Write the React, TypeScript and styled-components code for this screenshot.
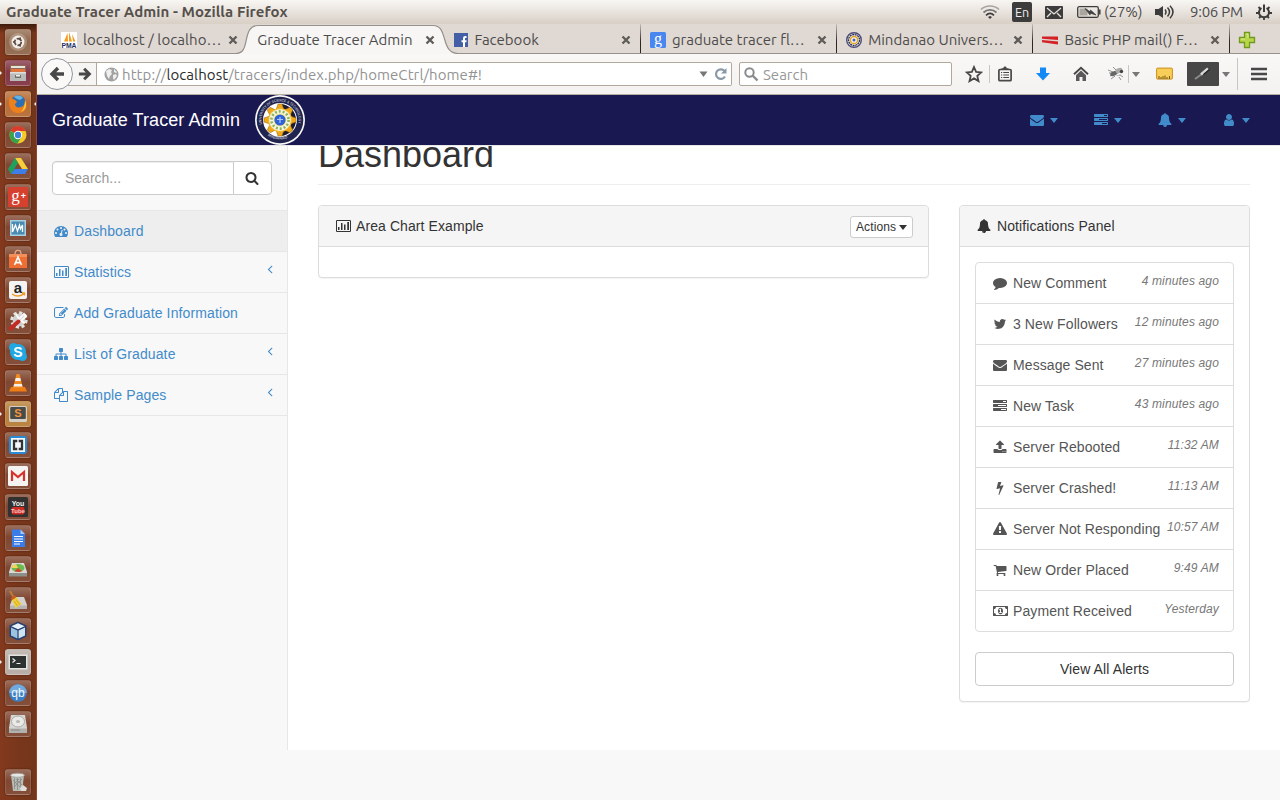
import React from "react";
import styled, { createGlobalStyle } from "styled-components";

const GlobalStyle = createGlobalStyle`
  * { box-sizing: border-box; }
  html, body { margin: 0; padding: 0; background: #f8f8f8; }
  body { width: 1280px; height: 800px; overflow: hidden; font-family: "Liberation Sans", Arial, sans-serif; font-size: 14px; line-height: 20px; color: #333; }
  button, input { font-family: inherit; }
`;

/* ---------- icon set ---------- */

const paths = {
  envelope:
    "M1792 710v794q0 66-47 113t-113 47h-1472q-66 0-113-47t-47-113v-794q44 49 101 87 362 246 497 345 57 42 92.5 65.5t94.5 48 110 24.5h2q51 0 110-24.5t94.5-48 92.5-65.5q170-123 498-345 57-39 100-87zm0-294q0 79-49 151t-122 123q-376 261-468 325-10 7-42.5 31t-54 38.5-52 32.5-57.5 27-50 9h-2q-23 0-50-9t-57.5-27-52-32.5-54-38.5-42.5-31q-91-64-262-182.5t-205-142.5q-62-42-117-115.5t-55-136.5q0-78 41.5-130t118.5-52h1472q65 0 112.5 47t47.5 113z",
  tasks:
    "M1024 1408h640v-128h-640v128zm-384-512h1024v-128h-1024v128zm640-512h384v-128h-384v128zm512 832v256q0 26-19 45t-45 19h-1664q-26 0-45-19t-19-45v-256q0-26 19-45t45-19h1664q26 0 45 19t19 45zm0-512v256q0 26-19 45t-45 19h-1664q-26 0-45-19t-19-45v-256q0-26 19-45t45-19h1664q26 0 45 19t19 45zm0-512v256q0 26-19 45t-45 19h-1664q-26 0-45-19t-19-45v-256q0-26 19-45t45-19h1664q26 0 45 19t19 45z",
  bell: "M912 1696q0-16-16-16-59 0-101.5-42.5t-42.5-101.5q0-16-16-16t-16 16q0 73 51.5 124.5t124.5 51.5q16 0 16-16zm816-288q0 52-38 90t-90 38h-448q0 106-75 181t-181 75-181-75-75-181h-448q-52 0-90-38t-38-90q50-42 91-88t85-119.5 74.5-158.5 50-206 19.5-260q0-152 117-282.5t307-158.5q-8-19-8-39 0-40 28-68t68-28 68 28 28 68q0 20-8 39 190 28 307 158.5t117 282.5q0 139 19.5 260t50 206 74.5 158.5 85 119.5 91 88z",
  user: "M1536 1399q0 109-62.5 187t-150.5 78h-854q-88 0-150.5-78t-62.5-187q0-85 8.5-160.5t31.5-152 58.5-131 94-89 134.5-34.5q131 128 313 128t313-128q76 0 134.5 34.5t94 89 58.5 131 31.5 152 8.5 160.5zm-256-887q0 159-112.5 271.5t-271.5 112.5-271.5-112.5-112.5-271.5 112.5-271.5 271.5-112.5 271.5 112.5 112.5 271.5z",
  comment:
    "M1792 896q0 174-120 321.5t-326 233-450 85.5q-70 0-145-8-198 175-460 242-49 14-114 22-17 2-30.5-9t-17.5-29v-1q-3-4-.5-12t2-10 4.5-9.5l6-9 7-8.5 8-9q7-8 31-34.5t34.5-38 31-39.5 32.5-51 27-59 26-76q-157-89-247.5-220t-90.5-281q0-130 71-248.5t191-204.5 286-136.5 348-50.5q244 0 450 85.5t326 233 120 321.5z",
  twitter:
    "M1684 408q-67 98-162 167 1 14 1 42 0 130-38 259.5t-115.5 248.5-184.5 210.5-258 146-323 54.5q-271 0-496-145 35 4 78 4 225 0 401-138-105-2-188-64.5t-114-159.5q33 5 61 5 43 0 85-11-112-23-185.5-111.5t-73.5-205.5v-4q68 38 146 41-66-44-105-115t-39-154q0-88 44-163 121 149 294.5 238.5t371.5 99.5q-8-38-8-74 0-134 94.5-228.5t228.5-94.5q140 0 236 102 109-21 205-78-37 115-142 178 93-10 186-50z",
  upload:
    "M1344 1472q0-26-19-45t-45-19-45 19-19 45 19 45 45 19 45-19 19-45zm256 0q0-26-19-45t-45-19-45 19-19 45 19 45 45 19 45-19 19-45zm128-224v320q0 40-28 68t-68 28h-1472q-40 0-68-28t-28-68v-320q0-40 28-68t68-28h427q21 56 70.5 92t110.5 36h256q61 0 110.5-36t70.5-92h427q40 0 68 28t28 68zm-325-648q-17 40-59 40h-256v448q0 26-19 45t-45 19h-256q-26 0-45-19t-19-45v-448h-256q-42 0-59-40-17-39 14-69l448-448q18-19 45-19t45 19l448 448q31 30 14 69z",
  bolt: "M1333 566q18 20 7 44l-540 1157q-13 25-42 25-4 0-14-2-17-5-25.5-19t-4.5-30l197-808-406 101q-4 1-12 1-18 0-31-11-18-15-13-39l201-825q4-14 16-23t28-9h328q19 0 32 12.5t13 29.5q0 8-5 18l-171 463 396-98q8-2 12-2 19 0 34 15z",
  warning:
    "M1024 1375v-190q0-14-9.5-23.5t-22.5-9.5h-192q-13 0-22.5 9.5t-9.5 23.5v190q0 14 9.5 23.5t22.5 9.5h192q13 0 22.5-9.5t9.5-23.5zm-2-374l18-459q0-12-10-19-13-11-24-11h-220q-11 0-24 11-10 7-10 21l17 457q0 10 10 16.5t24 6.5h185q14 0 23.5-6.5t10.5-16.5zm-14-934l768 1408q35 63-2 126-17 29-46.5 46t-63.5 17h-1536q-34 0-63.5-17t-46.5-46q-37-63-2-126l768-1408q17-31 47-49t65-18 65 18 47 49z",
  cart: "M704 1536q0 52-38 90t-90 38-90-38-38-90 38-90 90-38 90 38 38 90zm896 0q0 52-38 90t-90 38-90-38-38-90 38-90 90-38 90 38 38 90zm128-1088v512q0 24-16.5 42.5t-40.5 21.5l-1044 122q13 60 13 70 0 16-24 64h920q26 0 45 19t19 45-19 45-45 19h-1024q-26 0-45-19t-19-45q0-11 8-31.5t16-36 21.5-40 15.5-29.5l-177-823h-204q-26 0-45-19t-19-45 19-45 45-19h256q16 0 28.5 6.5t19.5 15.5 13 24.5 8 26 5.5 29.5 4.5 26h1201q26 0 45 19t19 45z",
  money:
    "M768 1152h384v-96h-128v-448h-114l-148 137 77 80q42-37 55-57h2v288h-128v96zm512-256q0 70-21 142t-59.5 134-101.5 101-138 39-138-39-101.5-101-59.5-134-21-142 21-142 59.5-134 101.5-101 138-39 138 39 101.5 101 59.5 134 21 142zm512 256v-512q-106 0-181-75t-75-181h-1152q0 106-75 181t-181 75v512q106 0 181 75t75 181h1152q0-106 75-181t181-75zm128-832v1152q0 26-19 45t-45 19h-1792q-26 0-45-19t-19-45v-1152q0-26 19-45t45-19h1792q26 0 45 19t19 45z",
  chart:
    "M448 1024v384h-192v-384zM832 512v896h-192v-896zM1216 704v704h-192v-704zM1664 384v1024h-224v-1024zM1760 256h-1600q-32 0-32 32v1216q0 32 32 32h1600q32 0 32-32v-1216q0-32-32-32zm160 32v1216q0 66-47 113t-113 47h-1600q-66 0-113-47t-47-113v-1216q0-66 47-113t113-47h1600q66 0 113 47t47 113z",
  dashboard:
    "M384 1152q0-53-37.5-90.5t-90.5-37.5-90.5 37.5-37.5 90.5 37.5 90.5 90.5 37.5 90.5-37.5 37.5-90.5zm192-448q0-53-37.5-90.5t-90.5-37.5-90.5 37.5-37.5 90.5 37.5 90.5 90.5 37.5 90.5-37.5 37.5-90.5zm428 481l101-382q6-26-7.5-48.5t-38.5-29.5-48 6.5-30 39.5l-101 382q-60 5-107 43.5t-63 98.5q-20 77 20 146t117 89 146-20 89-117q16-60-6-117t-72-91zm660-33q0-53-37.5-90.5t-90.5-37.5-90.5 37.5-37.5 90.5 37.5 90.5 90.5 37.5 90.5-37.5 37.5-90.5zm-640-640q0-53-37.5-90.5t-90.5-37.5-90.5 37.5-37.5 90.5 37.5 90.5 90.5 37.5 90.5-37.5 37.5-90.5zm448 192q0-53-37.5-90.5t-90.5-37.5-90.5 37.5-37.5 90.5 37.5 90.5 90.5 37.5 90.5-37.5 37.5-90.5zm320 448q0 261-141 483-19 29-54 29h-1402q-35 0-54-29-141-221-141-483 0-182 71-348t191-286 286-191 348-71 348 71 286 191 191 286 71 348z",
  edit: "M888 1184l116-116-152-152-116 116v56h96v96h56zm440-720q-16-16-33 1l-350 350q-17 17-1 33t33-1l350-350q17-17 1-33zm80 594v190q0 119-84.5 203.5t-203.5 84.5h-832q-119 0-203.5-84.5t-84.5-203.5v-832q0-119 84.5-203.5t203.5-84.5h832q63 0 117 25 15 7 18 23 3 17-9 29l-49 49q-14 14-32 8-23-6-45-6h-832q-66 0-113 47t-47 113v832q0 66 47 113t113 47h832q66 0 113-47t47-113v-126q0-13 9-22l64-64q15-15 35-7t20 29zm-96-738l288 288-672 672h-288v-288zm444 132l-92 92-288-288 92-92q28-28 68-28t68 28l152 152q28 28 28 68t-28 68z",
  sitemap:
    "M1792 1248v320q0 40-28 68t-68 28h-320q-40 0-68-28t-28-68v-320q0-40 28-68t68-28h96v-192h-512v192h96q40 0 68 28t28 68v320q0 40-28 68t-68 28h-320q-40 0-68-28t-28-68v-320q0-40 28-68t68-28h96v-192h-512v192h96q40 0 68 28t28 68v320q0 40-28 68t-68 28h-320q-40 0-68-28t-28-68v-320q0-40 28-68t68-28h96v-192q0-52 38-90t90-38h512v-192h-96q-40 0-68-28t-28-68v-320q0-40 28-68t68-28h320q40 0 68 28t28 68v320q0 40-28 68t-68 28h-96v192h512q52 0 90 38t38 90v192h96q40 0 68 28t28 68z",
  files:
    "M1696 384q40 0 68 28t28 68v1216q0 40-28 68t-68 28h-960q-40 0-68-28t-28-68v-288h-544q-40 0-68-28t-28-68v-672q0-40 20-88t48-76l408-408q28-28 76-48t88-20h416q40 0 68 28t28 68v328q68-40 128-40h416zm-544 213l-299 299h299v-299zm-640-384l-299 299h299v-299zm196 647l316-316v-416h-384v416q0 40-28 68t-68 28h-416v640h512v-256q0-40 20-88t48-76zm956 804v-1152h-384v416q0 40-28 68t-68 28h-416v640h896z",
  search:
    "M1216 832q0-185-131.5-316.5t-316.5-131.5-316.5 131.5-131.5 316.5 131.5 316.5 316.5 131.5 316.5-131.5 131.5-316.5zm512 832q0 52-38 90t-90 38q-54 0-90-38l-343-342q-179 124-399 124-143 0-273.5-55.5t-225-150-150-225-55.5-273.5 55.5-273.5 150-225 225-150 273.5-55.5 273.5 55.5 225 150 150 225 55.5 273.5q0 220-124 399l343 343q37 37 37 90z",
  angle:
    "M1203 544q0 13-10 23l-393 393 393 393q10 10 10 23t-10 23l-50 50q-10 10-23 10t-23-10l-466-466q-10-10-10-23t10-23l466-466q10-10 23-10t23 10l50 50q10 10 10 23z",
};
type IconName = keyof typeof paths;

const IconBox = styled.span<{ $w?: number }>`
  display: inline-flex;
  flex: none;
  justify-content: center;
  align-items: center;
  width: ${(p) => p.$w ?? 18}px;
  height: 20px;
  svg { flex: none; }
`;

function Icon({ name, w }: { name: IconName; w?: number }) {
  const vw = name === "money" || name === "chart" ? 1920 : 1792;
  return (
    <IconBox $w={w}>
      <svg width={vw / 128} height="14" viewBox={`0 0 ${vw} 1792`} fill="currentColor">
        <path fillRule={name === "chart" ? "evenodd" : "nonzero"} d={paths[name]} />
      </svg>
    </IconBox>
  );
}

const Caret = styled.span`
  flex: none;
  width: 0;
  height: 0;
  border-top: 5px solid currentColor;
  border-left: 4px solid transparent;
  border-right: 4px solid transparent;
`;

/* ---------- desktop shell ---------- */

const Desktop = styled.div`
  width: 1280px;
  height: 800px;
  display: flex;
  flex-direction: column;
  overflow: hidden;
`;

const UiText = styled.span<{ $size?: number; $ls?: number; $color?: string; $bold?: boolean }>`
  font-family: Ubuntu, "Open Sans", "Noto Sans", sans-serif;
  font-size: ${(p) => p.$size ?? 15}px;
  letter-spacing: ${(p) => p.$ls ?? 0}px;
  font-weight: ${(p) => (p.$bold ? 700 : 400)};
  color: ${(p) => p.$color ?? "#4c4c4c"};
  line-height: 20px;
  white-space: nowrap;
`;

const MenuBar = styled.header`
  flex: none;
  height: 24px;
  padding: 0 8px 0 6px;
  display: flex;
  align-items: center;
  justify-content: space-between;
  background: linear-gradient(#f8f6f3 0, #efebe7 30%, #d8cfc5 100%);
`;

const Indicators = styled.div`
  display: flex;
  align-items: center;
`;

const Indicator = styled.div<{ $w: number }>`
  width: ${(p) => p.$w}px;
  flex: none;
  display: flex;
  align-items: center;
  white-space: nowrap;
`;

const Lang = styled.div`
  width: 20px;
  height: 20px;
  border-radius: 2px;
  background: #3c3c3c;
  display: flex;
  align-items: center;
  justify-content: center;
`;

const Main = styled.div`
  flex: 1;
  display: flex;
  min-height: 0;
`;

const Launcher = styled.nav`
  width: 37px;
  flex: none;
  padding: 5px 0 5px;
  display: flex;
  flex-direction: column;
  gap: 5px;
  background: linear-gradient(#3c1a0b 0, rgba(123, 56, 27, 0) 9px), linear-gradient(90deg, #83391d, #78371c 50%, #74361b);
  border-right: 1px solid #93452f;
`;

const Slot = styled.div<{ $last?: boolean; $run?: boolean }>`
  height: 26px;
  flex: none;
  display: flex;
  align-items: center;
  margin-top: ${(p) => (p.$last ? "auto" : "0")};
  &::before {
    content: "";
    width: 2px;
    height: 4px;
    margin-right: 3px;
    clip-path: polygon(0 0, 100% 50%, 0 100%);
    background: ${(p) => (p.$run ? "#eee" : "transparent")};
  }
`;

const FocusMark = styled.span`
  width: 2px;
  height: 4px;
  margin-left: 3px;
  background: #eee;
  clip-path: polygon(100% 0, 0 50%, 100% 100%);
`;

const Tile = styled.div<{ $bg?: string }>`
  width: 26px;
  height: 26px;
  border-radius: 3px;
  border: 1px solid rgba(255, 235, 220, 0.14);
  background: linear-gradient(rgba(255, 255, 255, 0.24), rgba(255, 255, 255, 0.04) 45%, rgba(255, 255, 255, 0.08)),
    ${(p) => p.$bg ?? "#7a4029"};
  box-shadow: 0 0 2px rgba(40, 10, 0, 0.6);
  display: flex;
  align-items: center;
  justify-content: center;
`;

const Art = ({ children }: { children: React.ReactNode }) => (
  <svg width="20" height="20" viewBox="0 0 20 20">
    {children}
  </svg>
);

const glyph = (x: number, y: number, size: number, fill: string, text: string, font = "Liberation Sans", weight = 700) => (
  <text x={x} y={y} fontSize={size} fill={fill} textAnchor="middle" fontFamily={`"${font}", sans-serif`} fontWeight={weight}>
    {text}
  </text>
);

const apps: { id: string; bg?: string; run?: boolean; focus?: boolean; art: React.ReactNode }[] = [
  {
    id: "dash",
    bg: "#8d6448",
    art: (
      <>
        <circle cx="10" cy="10" r="9" fill="#fff" opacity=".22" />
        <circle cx="10" cy="10" r="6.4" fill="#f4eeea" />
        <circle cx="10" cy="10" r="3.3" fill="none" stroke="#5d4a40" strokeWidth="1.7" strokeDasharray="5.6 1.3" />
        <g fill="#5d4a40">
          <circle cx="5.9" cy="10" r="1" />
          <circle cx="12.1" cy="6.3" r="1" />
          <circle cx="12.1" cy="13.7" r="1" />
        </g>
      </>
    ),
  },
  {
    id: "files",
    bg: "#7e2f40",
    run: true,
    art: (
      <>
        <path d="M2 2h16v8H2z" fill="#8b6b55" />
        <path d="M3 3h14v2H3z" fill="#e9e4da" />
        <path d="M3 6h14v4H3z" fill="#e2733c" />
        <path d="M2 9h16v9H2z" fill="#b9b9b7" />
        <path d="M2 9h16v1.500H2z" fill="#dededc" />
        <path d="M7 12h6v3H7z" fill="#70706e" />
        <path d="M8 12h4v1.500H8z" fill="#eee" />
      </>
    ),
  },
  {
    id: "firefox",
    bg: "#b4682f",
    run: true,
    focus: true,
    art: (
      <>
        <circle cx="10" cy="10" r="9" fill="#e66a1c" />
        <circle cx="10.300" cy="8.200" r="7" fill="#2c6fb4" />
        <path d="M6 3c2-2 7-2 9 1l-3 2-3-1z" fill="#63b4e2" />
        <path d="M1 8c0-3 1-5 2-6l1 3c2 0 4 1 5 3l-2 2c0 3 3 4 6 3 3-1 4-3 4-7 3 5 2 13-7 13-6 0-9-5-9-11z" fill="#ee7f1d" />
        <path d="M17 6c2 5 1 10-4 12 3-3 4-7 4-12z" fill="#fbd03b" />
      </>
    ),
  },
  {
    id: "chrome",
    art: (
      <>
        <circle cx="10" cy="10" r="8.500" fill="#f5c927" />
        <path d="M10 10L2.600 5.700A8.500 8.500 0 0 1 17.600 6H10z" fill="#dd3a2c" />
        <path d="M2.600 5.700A8.500 8.500 0 0 0 9.500 18.500L13.400 12 10 10z" fill="#3ba24c" />
        <circle cx="10" cy="10" r="4.200" fill="#fff" />
        <circle cx="10" cy="10" r="3.200" fill="#3d82d8" />
      </>
    ),
  },
  {
    id: "drive",
    art: (
      <>
        <path d="M7 2h6l7 11h-6z" fill="#f8cf3a" />
        <path d="M7 2L0 13l3 5 7-11z" fill="#1fa05f" />
        <path d="M6.500 13H20l-3 5H3z" fill="#3e7ee8" />
      </>
    ),
  },
  {
    id: "plus",
    art: (
      <>
        <rect width="20" height="20" rx="1" fill="#d6402f" />
        {glyph(7.5, 14, 17, "#fff", "g", "Liberation Serif", 400)}
        {glyph(15.5, 12, 9, "#fff", "+")}
      </>
    ),
  },
  {
    id: "monitor",
    art: (
      <>
        <rect x="2" y="2" width="16" height="16" fill="#a9cfe2" />
        <rect x="3.500" y="3.500" width="13" height="13" fill="#4a8bb2" />
        <path d="M4.500 6v8l3-7 2 6 2-6 1 4 2-4v7" fill="none" stroke="#fff" strokeWidth="1.300" />
      </>
    ),
  },
  {
    id: "software",
    art: (
      <>
        <path d="M7 5c0-5 6-5 6 0" fill="none" stroke="#f1b28d" strokeWidth="1.200" />
        <path d="M1 5h18v14H1z" fill="#ee6e33" />
        <path d="M1 5h18v3H1z" fill="#f58f5a" />
        <path d="M6.500 16L10 8l3.500 8M7.500 13.600h5" fill="none" stroke="#fff" strokeWidth="1.600" />
      </>
    ),
  },
  {
    id: "amazon",
    art: (
      <>
        <rect x="1" y="1" width="18" height="18" rx="2" fill="#f4f3f1" />
        {glyph(10, 12.5, 15, "#222", "a")}
        <path d="M4 14c4 3 9 2.600 12-.4M14 13h2.500v2.500" fill="none" stroke="#f29a2c" strokeWidth="1.400" />
      </>
    ),
  },
  {
    id: "settings",
    art: (
      <>
        <circle cx="11" cy="9" r="6.400" fill="#d0d0ce" />
        <circle cx="11" cy="9" r="7.400" fill="none" stroke="#e4e4e2" strokeWidth="2.600" strokeDasharray="3.200 2.600" />
        <path d="M8 3l3 5 5-5 2 2-5 5 4 2" fill="none" stroke="#fafafa" strokeWidth="2" />
        <path d="M2.500 17.500l8-7" stroke="#c32a24" strokeWidth="4" strokeLinecap="round" />
      </>
    ),
  },
  {
    id: "skype",
    art: (
      <>
        <circle cx="10" cy="10" r="8" fill="#1fa8e3" />
        <circle cx="5.500" cy="5.500" r="4.500" fill="#1fa8e3" />
        <circle cx="14.500" cy="14.500" r="4.500" fill="#1fa8e3" />
        {glyph(10, 15, 14, "#fff", "S")}
      </>
    ),
  },
  {
    id: "vlc",
    art: (
      <>
        <path d="M3 14h14l2 4.500H1z" fill="#ee7d16" />
        <path d="M8.500 1h3L15 15H5z" fill="#f08a24" />
        <path d="M7.800 5h4.400l.8 3H7zM6.200 11h7.600l.7 2.500h-9z" fill="#f5f0ea" />
      </>
    ),
  },
  {
    id: "sublime",
    bg: "#b57a33",
    run: true,
    art: (
      <>
        <rect x="1" y="2" width="18" height="16" rx="1.500" fill="#d4cfc5" />
        <rect x="2.200" y="3" width="15.600" height="12" rx="1" fill="#4a4a48" />
        {glyph(10, 12.5, 11, "#f0973a", "S")}
      </>
    ),
  },
  {
    id: "brackets",
    art: (
      <>
        <rect x="1" y="1" width="18" height="18" rx="3" fill="#2a8ad4" />
        <rect x="3" y="3" width="14" height="14" fill="#f6f9fc" />
        <path d="M9.300 6H6v8h3.300M10.700 6H14v8h-3.300" fill="none" stroke="#333" strokeWidth="2.300" />
      </>
    ),
  },
  {
    id: "gmail",
    art: (
      <>
        <rect width="20" height="20" rx="1.500" fill="#f5f3f2" />
        <path d="M4 15V6l6 5 6-5v9" fill="none" stroke="#d5322c" strokeWidth="2.200" />
      </>
    ),
  },
  {
    id: "youtube",
    art: (
      <>
        <rect width="20" height="20" rx="1.500" fill="#333130" />
        {glyph(10, 8.5, 7, "#eee", "You", "Liberation Sans Narrow")}
        <rect x="3.500" y="10" width="13" height="7.500" rx="2" fill="#cf2b24" />
        {glyph(10, 16, 6, "#f0c8c4", "Tube", "Liberation Sans Narrow")}
      </>
    ),
  },
  {
    id: "docs",
    art: (
      <>
        <path d="M4 1.500h8.500L17 6v13H4z" fill="#3b7de8" />
        <path d="M12.500 1.500L17 6h-4.500z" fill="#a5c6f8" />
        <path d="M6 8.500h9M6 11h9M6 13.500h9M6 16h6" stroke="#fff" />
      </>
    ),
  },
  {
    id: "usage",
    art: (
      <>
        <path d="M4 4h12l3 9v4H1v-4z" fill="#d7d9d6" />
        <ellipse cx="10" cy="9" rx="6.500" ry="4" fill="#6cba4c" />
        <path d="M10 9H3.600c.3-2 2-3.500 4.400-3.900z" fill="#f3d35a" />
        <path d="M10 9l4 3.200c-2 1-5 1-7.500 0z" fill="#d8402f" />
        <path d="M1 14h18v3.500H1z" fill="#8d8f8b" />
      </>
    ),
  },
  {
    id: "sweeper",
    art: (
      <>
        <path d="M5 7h11l3 8v4H2v-4z" fill="#d3d2ce" />
        <path d="M2 15.500h17V19H2z" fill="#b5b4b0" />
        <path d="M2 1l3.500 6" stroke="#c07a34" strokeWidth="2" />
        <path d="M3.500 8.500l4-2.500 6 8-6 4z" fill="#f2cf3a" />
        <path d="M3 8l4-2.700 1.400 2L4.200 10z" fill="#c9571f" />
        <path d="M6 11l3.500 5M8 9.500l4 5.500" stroke="#c99a1c" strokeWidth=".7" />
      </>
    ),
  },
  {
    id: "box",
    art: (
      <>
        <path d="M10 .5l8.500 4v11L10 19.500l-8.500-4v-11z" fill="#27406f" />
        <path d="M10 2.300l6.600 2.900L10 8.300 3.400 5.200z" fill="#e8f2fa" />
        <path d="M3 6.500l6.400 3v8L3 14.500z" fill="#9dc3e2" />
        <path d="M17 6.500l-6.400 3v8l6.400-3z" fill="#cfe2f0" />
      </>
    ),
  },
  {
    id: "terminal",
    bg: "#b3a8a1",
    run: true,
    art: (
      <>
        <rect x=".5" y="2.500" width="19" height="15" fill="#e3e3e0" />
        <rect x="2" y="4" width="16" height="12" fill="#2d3230" />
        <path d="M4.500 6.500L7 8.500l-2.500 2M8.500 11.500h4" fill="none" stroke="#eee" strokeWidth="1.200" />
      </>
    ),
  },
  {
    id: "qb",
    art: (
      <>
        <circle cx="10" cy="10" r="8.800" fill="#3d7fc4" />
        <path d="M1.200 10a8.800 8.800 0 0 1 17.600 0z" fill="#70a9de" />
        {glyph(10, 13.5, 12, "#f4f8fc", "qb", "Liberation Sans", 400)}
      </>
    ),
  },
  {
    id: "disk",
    art: (
      <>
        <path d="M3 1h14l2 13v5H1v-5z" fill="#d5d5d2" />
        <ellipse cx="10" cy="7.500" rx="6.500" ry="5.500" fill="#e9e9e7" stroke="#a9a9a6" />
        <ellipse cx="10" cy="7.500" rx="2" ry="1.600" fill="#b5b5b2" />
        <path d="M1 14.500h18V19H1z" fill="#b1b1ad" />
        <path d="M3 16h9" stroke="#888" />
      </>
    ),
  },
];

const trash = (
  <>
    <path d="M3 3h13l-1.800 16H5z" fill="#b9bbb6" />
    <ellipse cx="9.500" cy="3.200" rx="7" ry="2" fill="#e6e6e3" stroke="#999" strokeWidth=".7" />
    <path d="M5 8l8 8M8 7l6 6M14 7l-8 8M11 7l-5 5M6.500 6v11M9.500 6v12M12.500 6v11" stroke="#83857f" strokeWidth=".7" />
    <path d="M12 16l3-3 4 3-1 3h-5z" fill="#dededb" />
  </>
);

/* ---------- browser chrome ---------- */

const Browser = styled.div`
  flex: 1;
  min-width: 0;
  display: flex;
  flex-direction: column;
`;

const TabStrip = styled.div`
  position: relative;
  height: 30px;
  flex: none;
  display: flex;
  padding-left: 15px;
  background: #e0d8d2;
  border-bottom: 1px solid #95918c;
`;

const ActiveShape = styled.svg`
  position: absolute;
  left: 199px;
  top: 0;
`;

const Tab = styled.div<{ $divider?: boolean }>`
  position: relative;
  width: 196.300px;
  height: 29px;
  padding: 3px 9px 0 9px;
  display: flex;
  align-items: center;
  gap: 6px;
  border-right: 1px solid transparent;
  border-image: ${(p) => (p.$divider ? "linear-gradient(rgba(60,50,40,.1), #2c2620 60%) 1" : "none")};
`;

const TabLabel = styled(UiText)`
  flex: 1;
`;

const Favicon = styled.svg`
  flex: none;
  display: block;
`;

const CloseMark = () => (
  <svg width="10" height="10" viewBox="0 0 10 10">
    <path d="M1.500 1.500l7 7M8.500 1.500l-7 7" stroke="#5e5b58" strokeWidth="2.300" />
  </svg>
);

const NewTab = styled.div`
  padding: 7px 0 0 8px;
`;

const Toolbar = styled.div`
  flex: none;
  height: 41px;
  padding: 0 0 0 4px;
  display: flex;
  align-items: center;
  background: linear-gradient(#f9f8f7, #f3f2f0);
  border-bottom: 1px solid #b8ae9f;
`;

const BackButton = styled.div`
  position: relative;
  width: 32px;
  height: 32px;
  flex: none;
  border-radius: 50%;
  border: 1px solid #8f979e;
  background: #faf9f8;
  display: flex;
  align-items: center;
  justify-content: center;
  z-index: 1;
`;

const ForwardButton = styled.div`
  width: 29px;
  height: 24px;
  margin-left: -5px;
  padding-left: 6px;
  flex: none;
  display: flex;
  align-items: center;
  justify-content: center;
  border: solid #b1a89b;
  border-width: 1px 1px 1px 0;
  background: #f6f5f4;
`;

const Field = styled.div<{ $w: number; $joined?: boolean }>`
  width: ${(p) => p.$w}px;
  height: 24px;
  flex: none;
  margin-left: ${(p) => (p.$joined ? 0 : 7)}px;
  padding: ${(p) => (p.$joined ? "0 1px 0 7px" : "0 4px")};
  display: flex;
  align-items: center;
  gap: 4px;
  background: #fff;
  border: 1px solid #b1a89b;
  border-left-width: ${(p) => (p.$joined ? 0 : 1)}px;
  border-radius: ${(p) => (p.$joined ? "0 2px 2px 0" : "2px")};
`;

const UrlText = styled(UiText)`
  flex: 1;
  padding-top: 1px;
  margin-left: -1px;
  b { font-weight: 400; color: #2b2b2b; }
`;

const SearchText = styled(UiText)`
  padding-top: 1px;
`;

const Tools = styled.div`
  display: flex;
  align-items: center;
  margin-left: 7px;
`;

const Tool = styled.div<{ $w: number; $dark?: boolean }>`
  width: ${(p) => p.$w}px;
  height: 24px;
  display: flex;
  align-items: center;
  justify-content: center;
  background: ${(p) => (p.$dark ? "#474747" : "none")};
  border-radius: 1px;
  color: #777;
`;

const Rule = styled.div<{ $h?: number }>`
  width: 1px;
  height: ${(p) => p.$h ?? 18}px;
  background: #c9c5c0;
`;

const Gap = styled.div<{ $w: number }>`
  width: ${(p) => p.$w}px;
`;

const Arrow = ({ flip, size }: { flip?: boolean; size: number }) => (
  <svg width={size} height={size} viewBox="0 0 16 16">
    <path d={flip ? "M7 2l6 6-6 6M13 8H1" : "M9 2L3 8l6 6M3 8h12"} fill="none" stroke="#484848" strokeWidth="3.400" />
  </svg>
);

/* ---------- web page ---------- */

const Page = styled.div`
  flex: 1;
  min-height: 0;
  display: flex;
  flex-direction: column;
  background: #f8f8f8;
`;

const NavBar = styled.div`
  height: 51px;
  flex: none;
  padding: 0 29px 0 15px;
  display: flex;
  align-items: center;
  background: #1a1850;
  border-bottom: 1px solid #e7e7e7;
`;

const Brand = styled.div`
  flex: 1;
  display: flex;
  align-items: center;
  gap: 15px;
  font-size: 18px;
  letter-spacing: 0.09px;
  color: #fff;
`;

const NavItem = styled.div<{ $end?: boolean }>`
  width: ${(p) => (p.$end ? 31 : 64)}px;
  display: flex;
  align-items: center;
  gap: 4px;
  color: #428bca;
`;

const Columns = styled.div`
  height: 604px;
  flex: none;
  display: flex;
`;

const SideBar = styled.aside`
  width: 251px;
  flex: none;
  border-right: 1px solid #e7e7e7;
  background: #f8f8f8;
`;

const SearchRow = styled.div`
  display: flex;
  padding: 15px;
  height: 65px;
  border-bottom: 1px solid #e7e7e7;
`;

const SearchInput = styled.input`
  width: 182px;
  height: 34px;
  padding: 6px 12px;
  font-size: 14px;
  color: #555;
  border: 1px solid #ccc;
  border-radius: 4px 0 0 4px;
  box-shadow: inset 0 1px 1px rgba(0, 0, 0, 0.075);
  background: #fff;
  outline: none;
  &::placeholder { color: #999; opacity: 1; }
`;

const SearchButton = styled.button`
  width: 39px;
  height: 34px;
  margin-left: -1px;
  padding: 0 1px 0 0;
  border: 1px solid #ccc;
  border-radius: 0 4px 4px 0;
  background: #fff;
  color: #333;
`;

const SideLink = styled.a<{ $active?: boolean }>`
  display: flex;
  height: 41px;
  padding: 10px 15px;
  border-bottom: 1px solid #e7e7e7;
  background: ${(p) => (p.$active ? "#eee" : "none")};
  color: #428bca;
  letter-spacing: 0.12px;
  gap: 4px;
`;

const Angle = styled.span`
  margin-left: auto;
  height: 14px;
  display: flex;
  align-items: center;
`;

const Content = styled.main`
  flex: 1;
  background: #fff;
  padding: 0 30px;
`;

const TitleClip = styled.div`
  height: 39px;
  overflow: hidden;
  border-bottom: 1px solid #eee;
  display: flex;
  align-items: flex-end;
  margin-bottom: 20px;
`;

const Title = styled.h1`
  margin: 0 0 9px;
  font-size: 36px;
  font-weight: 400;
  line-height: 40px;
`;

const PanelRow = styled.div`
  display: flex;
  align-items: flex-start;
  gap: 30px;
`;

const Panel = styled.section<{ $w: number }>`
  width: ${(p) => p.$w}px;
  border: 1px solid #ddd;
  border-radius: 4px;
  background: #fff;
  box-shadow: 0 1px 1px rgba(0, 0, 0, 0.05);
  letter-spacing: 0.09px;
`;

const PanelHead = styled.div`
  height: 41px;
  padding: 10px 15px;
  display: flex;
  gap: 4px;
  background: #f5f5f5;
  border-bottom: 1px solid #ddd;
  border-radius: 3px 3px 0 0;
`;

const PanelBody = styled.div`
  padding: 15px;
`;

const ActionsButton = styled.button`
  margin-left: auto;
  width: 63px;
  height: 22px;
  padding: 0 5px;
  display: flex;
  align-items: center;
  gap: 3px;
  font-size: 12px;
  line-height: 18px;
  letter-spacing: 0.1px;
  color: #333;
  background: #fff;
  border: 1px solid #ccc;
  border-radius: 3px;
`;

const List = styled.div`
  border: 1px solid #ddd;
  border-radius: 4px;
  margin-bottom: 20px;
`;

const ListItem = styled.a`
  height: 41px;
  padding: 10px 14px 10px 15px;
  display: flex;
  gap: 4px;
  color: #555;
  white-space: nowrap;
  border-bottom: 1px solid #ddd;
  &:last-child { height: 40px; border-bottom: 0; }
`;

const When = styled.em`
  margin-left: auto;
  font-size: 12px;
  line-height: 17px;
  letter-spacing: 0.15px;
  color: #777;
`;

const AlertsButton = styled.button`
  display: block;
  width: 100%;
  height: 34px;
  font-size: 14px;
  line-height: 20px;
  letter-spacing: 0.1px;
  color: #333;
  background: #fff;
  border: 1px solid #ccc;
  border-radius: 4px;
`;

function Seal({ size }: { size: number }) {
  return (
    <svg width={size} height={size} viewBox="0 0 50 50">
      <defs>
        <path id="sealTop" d="M7.200 30A18.500 18.500 0 1 1 42.800 30" />
        <path id="sealBottom" d="M5.500 31A20.800 20.800 0 0 0 44.500 31" />
      </defs>
      <circle cx="25" cy="25" r="25" fill="#f8f8f8" />
      <circle cx="25" cy="25" r="23.300" fill="#20244f" />
      <circle cx="25" cy="25" r="17" fill="#fff" />
      <path d="M25 9A16 16 0 0 1 25 41z" fill="#1c1c34" />
      <g fill="#f0a818" stroke="#8f6210" strokeWidth=".5">
        {[0, 45, 90, 135, 180, 225, 270, 315].map((a) => (
          <path key={a} d="M21 15L23 9h4l2 6z" transform={`rotate(${a} 25 25)`} />
        ))}
      </g>
      <circle cx="25" cy="25" r="12" fill="#f2b82a" />
      <circle cx="25" cy="25" r="10.800" fill="#f6f6e2" />
      <circle cx="25" cy="25" r="8.600" fill="none" stroke="#8fb45a" strokeWidth="2.600" strokeDasharray="2 1.900" />
      <circle cx="25" cy="25" r="6.500" fill="#f3e58a" />
      <circle cx="25" cy="25" r="5.600" fill="#2f62d8" />
      <path d="M22 24.500h6M25 22v6" stroke="#a9c8ff" strokeWidth="1.200" />
      <g fontFamily='"Liberation Sans", sans-serif' fontWeight="700" fill="#b9bac8" letterSpacing="0">
        <text fontSize="3.800">
          <textPath href="#sealTop" startOffset="1" textLength="65" lengthAdjust="spacingAndGlyphs">
            UNIVERSITY OF SCIENCE &amp; TECHNOLOGY
          </textPath>
        </text>
        <text fontSize="3.800">
          <textPath href="#sealBottom" startOffset="12">MINDANAO</textPath>
        </text>
      </g>
    </svg>
  );
}

function SealIcon() {
  return (
    <Favicon width="16" height="16" viewBox="0 0 16 16">
      <circle cx="8" cy="8" r="7.300" fill="#f4f2ee" stroke="#4a4a78" strokeWidth="1.400" />
      <circle cx="8" cy="8" r="5.500" fill="none" stroke="#2a2c52" strokeWidth="1.300" strokeDasharray="2 .6" />
      <circle cx="8" cy="8" r="3.600" fill="none" stroke="#e0a526" strokeWidth="1.500" />
      <circle cx="8" cy="8" r="1.500" fill="#3d62c4" />
    </Favicon>
  );
}

const sideLinks: { icon: IconName; label: string; more?: boolean; active?: boolean }[] = [
  { icon: "dashboard", label: "Dashboard", active: true },
  { icon: "chart", label: "Statistics", more: true },
  { icon: "edit", label: "Add Graduate Information" },
  { icon: "sitemap", label: "List of Graduate", more: true },
  { icon: "files", label: "Sample Pages", more: true },
];

const notifications: { icon: IconName; label: string; when: string }[] = [
  { icon: "comment", label: "New Comment", when: "4 minutes ago" },
  { icon: "twitter", label: "3 New Followers", when: "12 minutes ago" },
  { icon: "envelope", label: "Message Sent", when: "27 minutes ago" },
  { icon: "tasks", label: "New Task", when: "43 minutes ago" },
  { icon: "upload", label: "Server Rebooted", when: "11:32 AM" },
  { icon: "bolt", label: "Server Crashed!", when: "11:13 AM" },
  { icon: "warning", label: "Server Not Responding", when: "10:57 AM" },
  { icon: "cart", label: "New Order Placed", when: "9:49 AM" },
  { icon: "money", label: "Payment Received", when: "Yesterday" },
];

const navIcons: IconName[] = ["envelope", "tasks", "bell", "user"];

function SystemBar() {
  return (
    <MenuBar>
      <UiText $bold $ls={0.07} $color="#56514b">Graduate Tracer Admin - Mozilla Firefox</UiText>
      <Indicators>
        <Indicator $w={32}>
          <svg width="20" height="16" viewBox="0 0 20 16" fill="none" strokeWidth="1.700">
            <path d="M1 5.500c5-4.700 13-4.700 18 0" stroke="#a8a39c" />
            <path d="M3.500 8.500c3.800-3.500 9.200-3.500 13 0" stroke="#777" />
            <path d="M6 11.300c2.400-2.200 5.600-2.200 8 0" stroke="#3c3c3c" />
            <path d="M8 13l2-1 2 1-2 2z" fill="#3c3c3c" />
          </svg>
        </Indicator>
        <Indicator $w={33}>
          <Lang><UiText $size={12.5} $color="#eee">En</UiText></Lang>
        </Indicator>
        <Indicator $w={32}>
          <svg width="18" height="13" viewBox="0 0 18 13">
            <rect width="18" height="13" rx="1" fill="#3c3c3c" />
            <path d="M2 2l7 6 7-6M2 11l4-4M16 11l-4-4" fill="none" stroke="#e6e1db" strokeWidth="1.300" />
          </svg>
        </Indicator>
        <Indicator $w={27}>
          <svg width="24" height="12" viewBox="0 0 24 12">
            <rect x=".7" y=".7" width="20.600" height="10.600" rx="1.500" fill="none" stroke="#3c3c3c" strokeWidth="1.300" />
            <rect x="2.500" y="2.500" width="8" height="7" fill="#aaa59f" />
            <path d="M22.800 3.500v5" stroke="#3c3c3c" strokeWidth="1.500" />
            <path d="M8 2.500l5 3.200.5-1.700 5.500 5-5.500-1.800-.5 1.800z" fill="#3c3c3c" stroke="#3c3c3c" strokeWidth=".7" />
          </svg>
        </Indicator>
        <Indicator $w={51}><UiText $ls={-0.15}>(27%)</UiText></Indicator>
        <Indicator $w={35}>
          <svg width="20" height="16" viewBox="0 0 20 16">
            <path d="M0 5h3.500L8 2v12l-4.500-3H0z" fill="#3c3c3c" />
            <path d="M10 5.500q2 2.500 0 5M12.500 3.500q4 4.500 0 9M15 1.800q6 6.200 0 12.400" fill="none" stroke="#3c3c3c" strokeWidth="1.500" />
          </svg>
        </Indicator>
        <Indicator $w={66}><UiText $ls={-0.25}>9:06 PM</UiText></Indicator>
        <Indicator $w={16}>
          <svg width="16" height="16" viewBox="0 0 16 16" fill="none" stroke="#3c3c3c">
            <path d="M5.500 4a5 5 0 1 0 5 0" strokeWidth="2" />
            <path d="M8 .5v7.500" strokeWidth="2" />
            <path d="M2.500 3l2 2M13.500 3l-2 2M0 9h3M13 9h3M3 14l2-2M13 14l-2-2M8 13v3" strokeWidth="1.800" />
          </svg>
        </Indicator>
      </Indicators>
    </MenuBar>
  );
}

function Tabs() {
  return (
    <TabStrip>
      <ActiveShape width="222" height="30" viewBox="0 0 222 30">
        <path d="M0 29.500C8 29.500 9 22 10.500 15S14 1.500 22 1.500H197c8 0 9.500 6.500 11.500 13.500S213 29.500 222 29.500V31H0z" fill="#f7f6f4" />
        <path d="M0 29.500C8 29.500 9 22 10.500 15S14 1.500 22 1.500H197c8 0 9.500 6.500 11.500 13.500S213 29.500 222 29.500" fill="none" stroke="#95918c" strokeWidth="1.200" />
      </ActiveShape>
      <Tab>
        <Favicon width="16" height="16" viewBox="0 0 16 16">
          <rect width="16" height="16" fill="#fff" />
          <path d="M6.500 1L3 9.500h4zM8 0v9.500h3zM11 2l1 7.500h2.500z" fill="#f39c1f" />
          <text x="8" y="15.800" fontSize="6.800" fontWeight="700" textAnchor="middle" textLength="15" fill="#26325f" fontFamily='"Liberation Sans", sans-serif'>PMA</text>
        </Favicon>
        <TabLabel $ls={0.08}>localhost / localho…</TabLabel>
        <CloseMark />
      </Tab>
      <Tab>
        <TabLabel>Graduate Tracer Admin</TabLabel>
        <CloseMark />
      </Tab>
      <Tab $divider>
        <Favicon width="15" height="14" viewBox="0 0 15 14">
          <rect width="14" height="14" fill="#435fa5" />
          <path d="M12.500 4h-1.200q-1.300 0-1.300 1.300V14M7.500 8.300h5" fill="none" stroke="#fff" strokeWidth="2" />
        </Favicon>
        <TabLabel>Facebook</TabLabel>
        <CloseMark />
      </Tab>
      <Tab $divider>
        <Favicon width="16" height="16" viewBox="0 0 16 16">
          <rect width="16" height="16" rx="1.500" fill="#4a86f0" />
          <text x="8" y="11.500" fontSize="16" textAnchor="middle" fill="#fff" fontFamily='"Liberation Serif", serif'>g</text>
        </Favicon>
        <TabLabel>graduate tracer fl…</TabLabel>
        <CloseMark />
      </Tab>
      <Tab $divider>
        <SealIcon />
        <TabLabel>Mindanao Univers…</TabLabel>
        <CloseMark />
      </Tab>
      <Tab $divider>
        <Favicon width="16" height="16" viewBox="0 0 16 16">
          <path d="M0 4.500h16v3.500L0 6.800zM0 8l16 1.600v3L0 10.300z" fill="#d32126" />
        </Favicon>
        <TabLabel>Basic PHP mail() F…</TabLabel>
        <CloseMark />
      </Tab>
      <NewTab>
        <svg width="18" height="18" viewBox="0 0 18 18">
          <path d="M6.500 1.500h5v5h5v5h-5v5h-5v-5h-5v-5h5z" fill="#b9d64a" stroke="#6f9a1e" strokeWidth="1.300" />
          <path d="M8 3h2v4M3 8h4" stroke="#dcec93" fill="none" />
        </svg>
      </NewTab>
    </TabStrip>
  );
}

function NavigationBar() {
  return (
    <Toolbar>
      <BackButton><Arrow size={16} /></BackButton>
      <ForwardButton><Arrow size={14} flip /></ForwardButton>
      <Field $w={635} $joined>
        <svg width="15" height="15" viewBox="0 0 15 15">
          <circle cx="7.500" cy="7.500" r="7" fill="#a2a2a2" />
          <path d="M2 4l3-2 3 1-1 2 1 2-2 2-1 3-2-3zM10 2l3 3-1 1-2-1zM9 8l3-1 1 2-3 4-1-2z" fill="#efefef" />
        </svg>
        <UrlText $ls={0.08} $color="#939393">
          http://<b>localhost</b>/tracers/index.php/homeCtrl/home#!
        </UrlText>
        <svg width="9" height="8" viewBox="0 0 9 8"><path d="M.5 1.500h8L4.500 7z" fill="#777" /></svg>
        <svg width="18" height="14" viewBox="0 0 18 14">
          <path d="M13 9.500A4.800 4.800 0 1 1 12.500 4" fill="none" stroke="#8a99a8" strokeWidth="2.200" />
          <path d="M14.500 1v5.500H9z" fill="#8a99a8" />
        </svg>
      </Field>
      <Field $w={213}>
        <svg width="15" height="15" viewBox="0 0 15 15" fill="none" stroke="#8b8b8b">
          <circle cx="5.500" cy="5.500" r="4.200" strokeWidth="2" />
          <path d="M8.500 8.500l5 5" strokeWidth="2.400" />
        </svg>
        <SearchText $color="#979797">Search</SearchText>
      </Field>
      <Tools>
        <Tool $w={30}>
          <svg width="18" height="18" viewBox="0 0 18 18">
            <path d="M9 2l2.100 4.900 5.200.5-4 3.500 1.200 5.200L9 13.400l-4.500 2.700 1.200-5.200-4-3.500 5.200-.5z" fill="none" stroke="#484848" strokeWidth="1.800" />
          </svg>
        </Tool>
        <Rule />
        <Tool $w={30}>
          <svg width="16" height="16" viewBox="0 0 16 16" fill="none" stroke="#484848">
            <rect x="1.900" y="3.500" width="12.200" height="11.200" rx="1" strokeWidth="1.700" />
            <path d="M4.500 3.500V2.200h1.800C6.300 0 9.700 0 9.700 2.200h1.800v1.300z" fill="#484848" stroke="none" />
            <path d="M4 6.500h1.200M4 9h1.200M4 11.500h1.200M6.300 6.500H12M6.300 9H12M6.300 11.500H12" strokeWidth="1.200" />
          </svg>
        </Tool>
        <Tool $w={45}>
          <svg width="16" height="16" viewBox="0 0 16 16"><path d="M5 1.500h6V7h4l-7 7.500L1 7h4z" fill="#1488f5" /></svg>
        </Tool>
        <Tool $w={31}>
          <svg width="16" height="16" viewBox="0 0 16 16">
            <path d="M1 8.200L8 1.700l7 6.500" fill="none" stroke="#484848" strokeWidth="1.900" />
            <path d="M3 9.200l5-4.700 5 4.700V15h-3.500v-4h-3v4H3z" fill="#5a5a5a" />
          </svg>
        </Tool>
        <Gap $w={8} />
        <Tool $w={24}>
          <svg width="18" height="16" viewBox="0 0 18 16">
            <path d="M1 4l5 2M3 10l4-2M4 13l4-3M12 11l2 3M13 9l3 2M6 1l4 4M2 7h4" stroke="#777" strokeWidth=".8" />
            <ellipse cx="7" cy="7.500" rx="4" ry="2.200" transform="rotate(-25 7 7.500)" fill="#666" />
            <ellipse cx="12" cy="4.500" rx="3.600" ry="2.400" transform="rotate(-25 12 4.500)" fill="#aaa" />
            <circle cx="14.500" cy="5.500" r="1.700" fill="#444" />
            <path d="M8 10l6-2-1 2z" fill="#bbb" />
          </svg>
        </Tool>
        <Rule />
        <Tool $w={13}><Caret /></Tool>
        <Tool $w={45}>
          <svg width="17" height="14" viewBox="0 0 17 14">
            <rect x=".6" y="1.100" width="15.800" height="11" rx="1" fill="#f8cd58" stroke="#c98f1c" />
            <path d="M3 12V9M5 12v-2M7 12V9M9 12v-3.500M11 12v-2M13.500 12V9" stroke="#7a5a12" />
          </svg>
        </Tool>
        <Tool $w={32} $dark>
          <svg width="20" height="16" viewBox="0 0 20 16">
            <path d="M2 13l7-5" stroke="#8a8a8a" strokeWidth="2" />
            <path d="M8 8.500l7-6" stroke="#d8d8d8" strokeWidth="2.600" />
            <path d="M10.500 8.500l6-5" stroke="#222" strokeWidth="1.300" />
          </svg>
        </Tool>
        <Tool $w={13}><Caret /></Tool>
        <Gap $w={5} />
        <Rule $h={32} />
        <Tool $w={42}>
          <svg width="16" height="14" viewBox="0 0 16 14"><path d="M0 2h16M0 7h16M0 12h16" stroke="#484848" strokeWidth="2.600" /></svg>
        </Tool>
      </Tools>
    </Toolbar>
  );
}

export default function App() {
  return (
    <Desktop>
      <GlobalStyle />
      <SystemBar />
      <Main>
        <Launcher>
          {apps.map((a) => (
            <Slot key={a.id} $run={a.run}>
              <Tile $bg={a.bg}><Art>{a.art}</Art></Tile>
              {a.focus && <FocusMark />}
            </Slot>
          ))}
          <Slot $last>
            <Tile><Art>{trash}</Art></Tile>
          </Slot>
        </Launcher>
        <Browser>
          <Tabs />
          <NavigationBar />
          <Page>
            <NavBar>
              <Brand>
                Graduate Tracer Admin
                <Seal size={50} />
              </Brand>
              {navIcons.map((n, i) => (
                <NavItem key={n} $end={i === navIcons.length - 1}>
                  <Icon name={n} />
                  <Caret />
                </NavItem>
              ))}
            </NavBar>
            <Columns>
              <SideBar>
                <SearchRow>
                  <SearchInput placeholder="Search..." />
                  <SearchButton><Icon name="search" /></SearchButton>
                </SearchRow>
                {sideLinks.map((l) => (
                  <SideLink key={l.label} $active={l.active}>
                    <Icon name={l.icon} />
                    {l.label}
                    {l.more && <Angle><Icon name="angle" w={5} /></Angle>}
                  </SideLink>
                ))}
              </SideBar>
              <Content>
                <TitleClip><Title>Dashboard</Title></TitleClip>
                <PanelRow>
                  <Panel $w={611}>
                    <PanelHead>
                      <Icon name="chart" />
                      Area Chart Example
                      <ActionsButton>Actions <Caret /></ActionsButton>
                    </PanelHead>
                    <PanelBody />
                  </Panel>
                  <Panel $w={291}>
                    <PanelHead>
                      <Icon name="bell" />
                      Notifications Panel
                    </PanelHead>
                    <PanelBody>
                      <List>
                        {notifications.map((n) => (
                          <ListItem key={n.label}>
                            <Icon name={n.icon} />
                            {n.label}
                            <When>{n.when}</When>
                          </ListItem>
                        ))}
                      </List>
                      <AlertsButton>View All Alerts</AlertsButton>
                    </PanelBody>
                  </Panel>
                </PanelRow>
              </Content>
            </Columns>
          </Page>
        </Browser>
      </Main>
    </Desktop>
  );
}
